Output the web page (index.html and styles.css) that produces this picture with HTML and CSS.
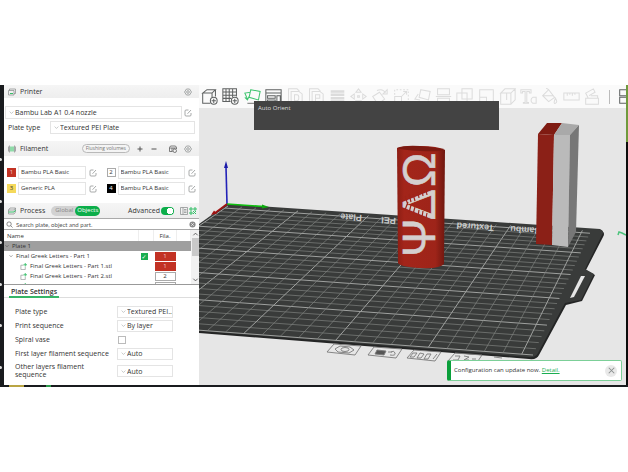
FILE: index.html
```html
<!DOCTYPE html>
<html lang="en">
<head>
<meta charset="utf-8">
<title>Slicer</title>
<link rel="stylesheet" href="styles.css">
</head>
<body>
<svg class="defs" aria-hidden="true">
  <symbol id="gear" viewBox="0 0 16 16"><path d="M5 2h6l4 6-4 6H5L1 8z"/><circle cx="8" cy="8" r="2.6"/></symbol>
  <symbol id="edit" viewBox="0 0 16 16"><path d="M9 2H4Q2 2 2 4v8q0 2 2 2h8q2 0 2-2V8M7 9.500l7-7.500"/></symbol>
  <symbol id="chev" viewBox="0 0 16 16"><path d="M2 5l6 6 6-6"/></symbol>
  <symbol id="part" viewBox="0 0 16 16"><path d="M8 5H2v10h10V9"/><path class="green" d="M12 0v8M8 4h8"/></symbol>
</svg>
<main class="app">
  <div class="edge"><i></i><i></i><i></i><i></i><i></i><i></i></div>
  <aside class="sidebar">
    <header class="bar bar-first">
      <svg class="ico" viewBox="0 0 16 16"><path d="M3 5V2h12v9h-3M1 5h11v9H1z"/><path class="green" d="M4 11h6"/></svg>
      <h2>Printer</h2>
      <button class="push" aria-label="Printer settings"><svg class="ico"><use href="#gear"/></svg></button>
    </header>
    <section class="printer">
      <div class="line">
        <label class="pick grow"><svg><use href="#chev"/></svg><select aria-label="Printer model"><option>Bambu Lab A1 0.4 nozzle</option></select></label>
        <button aria-label="Edit printer"><svg class="ico"><use href="#edit"/></svg></button>
      </div>
      <div class="line plate">
        <label for="plate">Plate type</label>
        <div class="pick grow"><svg><use href="#chev"/></svg><select id="plate"><option>Textured PEI Plate</option></select></div>
      </div>
    </section>
    <header class="bar">
      <svg class="ico" viewBox="0 0 16 16"><path class="spool" d="M4 3h8v10H4z"/><path d="M3 1v14M13 1v14M1 3v10M15 3v10"/></svg>
      <h2>Filament</h2>
      <button class="flush push">Flushing volumes</button>
      <button class="sign" aria-label="Add"><svg class="ico" viewBox="0 0 16 16"><path class="heavy" d="M8 3v10M3 8h10"/></svg></button>
      <button class="sign" aria-label="Remove"><svg class="ico" viewBox="0 0 16 16"><path class="heavy" d="M3 8h10"/></svg></button>
      <button class="ams" aria-label="Sync"><svg class="ico" viewBox="0 0 16 16"><path class="dark" d="M7 13H1V5l2-3h10l2 3v3M1 6h14M6 6v7M10 6v2"/><circle class="dark" cx="11.500" cy="11.500" r="3.500"/></svg></button>
      <button aria-label="Filament settings"><svg class="ico"><use href="#gear"/></svg></button>
    </header>
    <section class="filaments">
      <div class="fil"><b class="sw red">1</b><select aria-label="Filament 1"><option>Bambu PLA Basic</option></select><button aria-label="Edit 1"><svg class="ico"><use href="#edit"/></svg></button></div>
      <div class="fil"><b class="sw white">2</b><select aria-label="Filament 2"><option>Bambu PLA Basic</option></select><button aria-label="Edit 2"><svg class="ico"><use href="#edit"/></svg></button></div>
      <div class="fil"><b class="sw yellow">3</b><select aria-label="Filament 3"><option>Generic PLA</option></select><button aria-label="Edit 3"><svg class="ico"><use href="#edit"/></svg></button></div>
      <div class="fil"><b class="sw black">4</b><select aria-label="Filament 4"><option>Bambu PLA Basic</option></select><button aria-label="Edit 4"><svg class="ico"><use href="#edit"/></svg></button></div>
    </section>
    <header class="bar">
      <svg class="ico" viewBox="0 0 16 16"><path d="M4 2h11l-3 4H1zM1 6v8h11l3-4V2"/><path class="green" d="M1 10h11l3-4"/></svg>
      <h2>Process</h2>
      <div class="seg"><button>Global</button><button class="on">Objects</button></div>
      <label class="adv push">Advanced<input type="checkbox" checked></label>
      <button aria-label="Compare"><svg class="ico" viewBox="0 0 16 16"><path d="M1 1h14v14H1zM6 1v14M8 5h5M8 8h5M8 11h5"/></svg></button>
      <button class="last" aria-label="Parameters"><svg class="ico" viewBox="0 0 16 16"><path class="green" d="M2 2h4v4H2zM10 2h4v4h-4zM2 10h4v4H2zM8 8l6 6M14 8l-6 6"/></svg></button>
    </header>
    <div class="search">
      <svg class="ico" viewBox="0 0 16 16"><circle class="dark" cx="7" cy="7" r="5"/><path class="dark" d="M11 11l4 4"/></svg>
      <input type="text" aria-label="Search" placeholder="Search plate, object and part.">
      <button aria-label="Clear"><svg class="ico" viewBox="0 0 16 16"><circle class="fill" cx="8" cy="8" r="7"/><path class="cut" d="M5 5l6 6M11 5l-6 6"/></svg></button>
    </div>
    <div class="tree">
      <table>
        <thead><tr><th class="name">Name</th><th class="tick"></th><th class="fila">Fila.</th><th class="rest"></th></tr></thead>
        <tbody>
          <tr class="group"><td><svg class="tw"><use href="#chev"/></svg>Plate 1</td><td></td><td></td><td></td></tr>
          <tr class="obj"><td><svg class="tw"><use href="#chev"/></svg>Final Greek Letters - Part 1</td><td><input type="checkbox" class="ok" aria-label="Printable" checked></td><td><span class="chip red">1</span></td><td></td></tr>
          <tr class="sub"><td><svg class="tp"><use href="#part"/></svg>Final Greek Letters - Part 1.stl</td><td></td><td><span class="chip red">1</span></td><td></td></tr>
          <tr class="sub"><td><svg class="tp"><use href="#part"/></svg>Final Greek Letters - Part 2.stl</td><td></td><td><span class="chip white">2</span></td><td></td></tr>
          <tr class="sub"><td><svg class="tp"><use href="#part"/></svg>Final Greek Letters - Part 3.stl</td><td></td><td><span class="chip white">4</span></td><td></td></tr>
        </tbody>
      </table>
      <div class="scroll"><svg viewBox="0 0 16 16"><path d="M3 11l5-5 5 5"/></svg><i></i><svg viewBox="0 0 16 16"><path d="M3 5l5 5 5-5"/></svg></div>
    </div>
    <div class="tabs"><h3>Plate Settings</h3></div>
    <form class="settings">
      <label for="s1">Plate type</label><div class="pick"><svg><use href="#chev"/></svg><select id="s1"><option>Textured PEI...</option></select></div>
      <label for="s2">Print sequence</label><div class="pick"><svg><use href="#chev"/></svg><select id="s2"><option>By layer</option></select></div>
      <label for="s3">Spiral vase</label><input id="s3" type="checkbox" class="box">
      <label for="s4">First layer filament sequence</label><div class="pick"><svg><use href="#chev"/></svg><select id="s4"><option>Auto</option></select></div>
      <label for="s5" class="two">Other layers filament sequence</label><div class="pick"><svg><use href="#chev"/></svg><select id="s5"><option>Auto</option></select></div>
    </form>
  </aside>
  <section class="view">
    <nav class="tools">
      <button class="act" aria-label="Add"><svg viewBox="0 0 20 20"><path d="M2 6l5-4h10l-4 4zM2 6v12h9M13 6v5M17 2v8"/><circle cx="15" cy="15" r="4"/><path d="M15 12.500v5M12.500 15h5"/></svg></button>
      <button class="act" aria-label="Add plate"><svg viewBox="0 0 20 20"><path d="M10 16H1V1h16v9M1 4.700h16M1 8.500h16M1 12.200h10M4.700 1v15M8.500 1v15M12.500 1v10"/><circle cx="15" cy="15" r="4"/><path d="M15 12.500v5M12.500 15h5"/></svg></button>
      <button class="hot" aria-label="Auto orient"><svg viewBox="0 0 20 20"><path d="M8 2l11 2-2 10-11-3zM8 5L1 6l3 7M1 11l3 3 2-4"/><path class="gray" d="M4 18h13"/></svg></button>
      <button class="act" aria-label="Arrange"><svg viewBox="0 0 20 20"><path d="M1 2h18v4H1zM1 6v13h18V6M3 9h9v3H3zM14 9h4v9h-4zM3 14h9v4H3z"/></svg></button>
      <button aria-label="Split objects"><svg viewBox="0 0 20 20"><path d="M3 15V1h10l3 3M6 4h9l4 3v12H6zM10 8h3q2 0 2 3v1q0 3-2 3h-3z"/></svg></button>
      <button aria-label="Split parts"><svg viewBox="0 0 20 20"><path d="M3 15V1h10l3 3M6 4h9l4 3v12H6zM10 16V8h5v4h-5"/></svg></button>
      <button aria-label="Layers"><svg viewBox="0 0 20 20"><path class="thick" d="M2 4h16M2 8h16M2 12h16M2 16h16"/></svg></button>
      <button aria-label="Move"><svg viewBox="0 0 20 20"><path d="M10 1l3 4H7zM10 19l3-4H7zM1 10l4-3v6zM19 10l-4-3v6zM9 9h2v2H9z"/></svg></button>
      <button aria-label="Rotate"><svg viewBox="0 0 20 20"><path d="M2 10l8-5 6 8-8 6zM7 3q7-3 10 3M14 7h5V2z"/></svg></button>
      <button aria-label="Scale"><svg viewBox="0 0 20 20"><path d="M2 10h8v8H2z"/><path class="dash" d="M2 8V2h16v16h-6"/><path d="M10 10l6-6M12 4h4v4"/></svg></button>
      <button aria-label="Lay on face"><svg viewBox="0 0 20 20"><path d="M8 2l11 2-2 10-11-3zM5 7l-4 6 6 1"/></svg></button>
      <button aria-label="Cut"><svg viewBox="0 0 20 20"><path d="M3 8V1h14v7zM1 10h18M3 12h14v7H3z"/></svg></button>
      <button aria-label="Boolean"><svg viewBox="0 0 20 20"><path d="M1 6h12v12H1zM7 1h12v12H7z"/></svg></button>
      <button aria-label="Support"><svg viewBox="0 0 20 20"><path d="M2 2h16v16h-8v-7H2zM2 11v7h8"/></svg></button>
      <button aria-label="Seam"><svg viewBox="0 0 20 20"><path d="M2 6l5-5h12l-5 5zM2 6v13h12V6M14 19l5-5V1M9 6v8"/></svg></button>
      <button aria-label="Text"><svg viewBox="0 0 20 20"><path d="M1 2h12v4h-2V4H8v13h2v1H4v-1h2V4H3v2H1zM19 11v7h-4q-2-1-2-3.500t2-3.500z"/></svg></button>
      <button aria-label="Color"><svg viewBox="0 0 20 20"><path d="M2 9l7-7 7 9-7 5zM2 9h13M9 2L6 0M17 12q3 5 0 6t0-6z"/></svg></button>
      <button aria-label="Measure"><svg viewBox="0 0 20 20"><path d="M1 6h18v8H1zM5 6v3M8 6v2M11 6v3M14 6v2"/></svg></button>
      <button aria-label="Assembly"><svg viewBox="0 0 20 20"><path d="M2 12h15v7H2zM5 12l-3-6 9-5 2 4-7 4M8 9h8v3"/></svg></button>
      <span class="sep"></span>
      <button class="act end" aria-label="Assembly view"><svg viewBox="0 0 20 20"><path d="M2 2h8v7H2zM2 11h8v7H2zM12 2h8v7M12 18h8v-7M10 6h5M10 14h5"/></svg></button>
    </nav>
    <svg class="scene" viewBox="199 108 427 277" preserveAspectRatio="xMinYMin slice" role="img" aria-label="Build plate">
      <defs>
        <linearGradient id="cyl"><stop offset="0" stop-color="#8c1e14"/><stop offset=".15" stop-color="#a3251a"/><stop offset=".8" stop-color="#9e2419"/><stop offset="1" stop-color="#6f170f"/></linearGradient>
      </defs>
      <path class="plate-side" d="M199 225L227 205 600 230Q606 232 603 237L586 270 595 275 582 301 566 305 539 355Q537 360 529 359L199 333z"/>
      <path class="plate-top" d="M199 224L227 204 600 229Q605 231 602 235L585 269 594 274 581 300 565 303 538 353Q536 358 528 357L199 331z"/>
      <path class="slot" d="M581 276h4l-11 21-4 1z"/>
      <g id="grid"></g>
      <g class="mark">
        <text transform="translate(362 215) rotate(184)">Plate</text><text transform="translate(396 218) rotate(184)">PEI</text>
        <text transform="translate(494 225) rotate(184)">Textured</text><text transform="translate(541 228) rotate(184)">Bambu</text>
      </g>
      <g class="stamps">
        <path d="M334 344l27 2-6 9-28-3zM335 349l5-3 10 1 4 3-5 3-11-1z"/><ellipse cx="345" cy="349.500" rx="4" ry="2"/>
        <path d="M374 347l28 2-6 9-28-3zM388 352h4M390 355q6 1 5-2t-4-1"/><path class="solid" d="M377 350l9 1-2 4-9-1z"/>
        <path d="M414 350l27 2-6 9-28-3zM413 353l4 0-3 4h-4zM420 353l4 1-3 4h-4zM427 354l4 0-3 5h-4zM437 354l-4 5"/>
        <path d="M455 353l27 2-6 9-28-3zM455 356h5l-2 4h-5M464 356l5 1-5 3h5M472 359h4M494 357l8 1"/>
      </g>
      <path class="z" d="M227 204l-1-37"/><path class="zt" d="M226 161l2 7h-4z"/>
      <path class="y" d="M227 204l37 2.500"/><path class="yt" d="M269 207l-7-2.500v4z"/>
      <path class="x" d="M227 204l-12 9"/><path class="xt" d="M211 215l3-4.500 3 3z"/>
      <path fill="url(#cyl)" d="M397 148Q402 146 420 146T445 150L444 264Q440 269 420 268T398 263z"/>
      <path class="lid" d="M397 148Q404 145 420 146T445 150Q438 152 420 151T397 148z"/>
      <g class="greek">
        <text transform="translate(435 257) rotate(-90)">Ψ</text>
        <text transform="translate(435 220) rotate(-90)">Δ</text>
        <text transform="translate(435 187) rotate(-90)">Ω</text>
      </g>
      <path class="hatch" d="M405 196l3 9M409 194l2 8M413 194l2 7M418 192l1 6M422 190l1 6M426 190l1 5M405 210l3-8M409 213l2-8M413 214l2-7M418 216l1-6M422 217l1-6M426 218l1-5"/>
      <path class="b1" d="M538 134L547 123H562L554 135z"/>
      <path class="b2" d="M554 135L562 123 579 125 570 135z"/>
      <path class="b3" d="M538 134L554 135 552 245 536 244z"/>
      <path class="b4" d="M554 135L570 135 568 247 552 245z"/>
      <path class="b5" d="M570 135L579 125 576 232 568 247z"/>
      <path class="tag" d="M618 235l1-3 3 1 4 2"/>
    </svg>
    <div class="tip" role="tooltip">Auto Orient</div>
    <div class="toast"><p>Configuration can update now. <a href="#">Detail.</a></p><button aria-label="Close"><svg viewBox="0 0 16 16"><path d="M4 4l8 8M12 4l-8 8"/></svg></button></div>
  </section>
  <div class="redge"></div>
</main>
<script src="grid.js"></script>
</body>
</html>
```
FILE: styles.css
```css
* { box-sizing: border-box; }
body { margin: 0; padding: 85px 0; height: 100vh; min-height: 472px; background: #fff; color: #333; font: 7px/9px "Open Sans", "Noto Sans", sans-serif; }
.defs { position: absolute; width: 0; height: 0; }
h2, h3, p { margin: 0; font: inherit; }
button, select, input { margin: 0; padding: 0; border: 0; background: none; color: inherit; font: inherit; appearance: none; }
button { display: flex; align-items: center; justify-content: center; flex: none; }
svg { fill: none; stroke: #8b8f8f; stroke-width: 1.5; }
.green { stroke: #35bf68; stroke-width: 2; }
.dark { stroke: #555; }
.heavy { stroke: #555; stroke-width: 2; }
.spool { fill: #8fdba9; stroke: none; }
.fill { fill: #8a8a8a; stroke: none; }
.cut { stroke: #fff; }
.ico { width: 8px; height: 8px; display: block; flex: none; }
.push { margin-left: auto; }
.grow { flex: 1; }

.app { display: grid; grid-template-columns: 4px minmax(195px, 31%) 1fr 2px; height: 100%; background: #191b1e linear-gradient(90deg, transparent 9px, #b9a544 9px 24px, transparent 24px 46px, #2c9a4c 46px 51px, transparent 51px); padding-bottom: 2px; }
.edge { display: flex; flex-direction: column; justify-content: space-between; padding: 73px 0 16px; background: #191b1e; }
.edge i { width: 2px; height: 3px; background: #ddd; border-radius: 0 2px 2px 0; }
.redge { background: linear-gradient(#6f9a3c 57px, #0c0c0c 57px); }

.sidebar { background: #fff; display: flex; flex-direction: column; overflow: hidden; }
.bar { display: flex; align-items: center; height: 15px; padding: 0 7px 0 4px; background: linear-gradient(#f5f5f5, #eee); flex: none; }
.bar-first { height: 13px; }
.bar h2 { margin-left: 4px; }
.printer { padding: 8px 4px 7px 1px; display: grid; gap: 2px; }
.line { display: flex; align-items: center; }
.line button { margin: 0 3px 0 2px; }
.pick { display: flex; align-items: center; height: 13px; border: 1px solid #e4e4e4; padding-left: 3px; min-width: 0; }
.pick svg { width: 5px; height: 5px; flex: none; }
.pick select { flex: 1; min-width: 0; padding-left: 1px; overflow: hidden; white-space: nowrap; }
.plate { padding-left: 3px; }
.plate label { width: 42px; }
.flush { border: 1px solid #b9b9b9; border-radius: 5px; height: 9px; padding: 0 3px; font-size: 5px; color: #777; background: #f4f4f4; }
.sign { margin-left: 6px; }
.ams { margin: 0 7px 0 11px; }
.filaments { display: grid; grid-template-columns: 1fr 1fr; gap: 3px 10px; padding: 10px 3px 8px 3px; }
.fil { display: flex; align-items: center; height: 13px; }
.fil select { flex: 1; min-width: 0; height: 13px; border: 1px solid #e4e4e4; margin: 0 3px 0 2px; padding-left: 2px; font-size: 6px; }
.sw { width: 9px; height: 9px; font-size: 6px; line-height: 9px; text-align: center; font-weight: 400; }
.red { background: #c23224; color: #f2c9c4; }
.white { background: #fff; border: 1px solid #aaa; line-height: 7px; }
.yellow { background: #f5d95b; }
.black { background: #000; color: #fff; }
.seg { display: flex; height: 10px; margin-left: 6px; background: #d2d2d2; border-radius: 5px; }
.seg button { padding: 0 2px 0 4px; font-size: 6px; color: #888; border-radius: 5px; }
.seg .on { background: #0cae4a; color: #fff; padding: 0 2px; }
.adv { display: flex; align-items: center; gap: 1px; margin-right: 6px; }
.adv input { width: 13px; height: 8px; border-radius: 4px; background: radial-gradient(circle at 9px 4px, #fff 3px, #0cae4a 3px); }
.last { margin: 0 -5px 0 1px; }

.search { display: flex; align-items: center; height: 12px; padding: 0 3px 0 2px; border: solid #aaa; border-width: 1px 0; flex: none; }
.search .ico { width: 7px; height: 7px; }
.search input { flex: 1; min-width: 0; height: 9px; padding-left: 3px; font: 6px/9px Lato, sans-serif; }
.search input::placeholder { color: #555; opacity: 1; }
.tree { display: flex; height: 55px; overflow: hidden; border-bottom: 1px solid #999; flex: none; }
table { flex: 1; border-collapse: collapse; table-layout: fixed; width: 100%; height: 61px; font-size: 6px; line-height: 8px; }
th, td { padding: 0; height: 10px; font-weight: 400; text-align: left; white-space: nowrap; }
th { height: 11px; border-right: 1px solid #eee; padding-left: 3px; }
.tick { width: 15px; }
.fila { width: 23px; text-align: center; padding: 0; }
.rest { width: 14px; }
.group { background: #9f9f9f; }
td:nth-child(2) { padding-left: 2px; }
.tw { width: 4px; height: 4px; margin: 0 3px 0 1px; stroke: #444; stroke-width: 2; vertical-align: middle; }
.obj .tw { margin-left: 5px; margin-right: 3px; }
.tp { width: 7px; height: 7px; margin: 0 3px 0 16px; vertical-align: middle; }
.ok { display: block; width: 7px; height: 7px; background: #19ad50; }
.ok::after { content: "✓"; display: block; color: #fff; font: 6px/7px "DejaVu Sans", sans-serif; text-align: center; }
.chip { display: block; height: 9px; margin: 0 1px; line-height: 9px; text-align: center; }
.chip.white { line-height: 7px; }
.scroll { width: 8px; background: #f1f1f1; display: flex; flex-direction: column; align-items: center; }
.scroll svg { width: 7px; height: 8px; stroke: #555; stroke-width: 2; }
.scroll i { width: 7px; height: 18px; background: #c9c9c9; margin-bottom: auto; }

.tabs { display: flex; padding-left: 5px; border-bottom: 1px solid #ddd; flex: none; }
.tabs h3 { height: 13px; padding: 0 2px; line-height: 13px; font-weight: 600; border-bottom: 2px solid #35b566; margin-bottom: -1px; }
.settings { display: grid; grid-template-columns: 102px 56px; gap: 1px 0; padding: 7px 0 0 11px; align-items: center; }
.settings .pick { height: 12px; }
.settings label { line-height: 13px; }
.settings .two { line-height: 8px; width: 80px; padding: 2px 0; }
.box { width: 8px; height: 8px; border: 1px solid #bbb; margin-left: 1px; }

.view { position: relative; display: flex; flex-direction: column; min-width: 0; min-height: 0; background: #e6e6e6; overflow: hidden; }
.tools { display: flex; height: 23px; background: #fafafa; flex: none; }
.tools button { flex: 1; }
.tools svg { width: 17px; height: 17px; stroke: #dcdcdc; stroke-width: 1.2; }
.tools .act svg { stroke: #5f6262; }
.tools .hot svg { stroke: #3fc46f; }
.tools .gray { stroke: #777; }
.thick { stroke-width: 3; }
.dash { stroke-dasharray: 2 2; }
.sep { width: 1px; height: 14px; margin: 5px 8px 0 6px; background: #bbb; }
.tools .end { flex: 0 0 8px; overflow: hidden; justify-content: flex-start; }
.tools .end svg { flex: none; }
.scene { flex: 1; min-height: 0; width: 100%; display: block; stroke: none; }
.plate-side { fill: #242525; }
.plate-top { fill: #393b3a; }
.slot { fill: #e6e6e6; }
.minor { stroke: #808280; stroke-width: .7; }
.major { stroke: #9fa19f; stroke-width: 1; }
.mark text { font: 700 9px "Liberation Sans", sans-serif; fill: #c9cbca; }
.stamps path, .stamps ellipse { stroke: #7b7b7b; stroke-width: .9; }
.stamps .solid { fill: #555; }
.x, .y, .z { stroke-width: 1.6; }
.x { stroke: #a01212; } .xt { fill: #a01212; }
.y { stroke: #0fc010; } .yt { fill: #0fa810; }
.z { stroke: #2222b8; } .zt { fill: #1a1aa8; }
.lid { fill: #7c1a11; }
.greek text { font: 46px "Liberation Sans", sans-serif; fill: #d4cfcf; stroke: #d4cfcf; stroke-width: .6; }
.hatch { stroke: #9f2419; stroke-width: 1.2; }
.b1 { fill: #7f1b12; } .b2 { fill: #a9a9a9; } .b3 { fill: #8b2017; } .b4 { fill: #bababa; } .b5 { fill: #777; }
.tag { stroke: #4cc47c; stroke-width: 1.5; }
.tip { position: absolute; left: 55px; top: 16px; width: 245px; height: 29px; padding: 3px 4px; background: #434343; color: #ddd; font-size: 6px; }
.toast { position: absolute; right: 4px; bottom: 4px; width: 175px; height: 21px; display: flex; align-items: center; justify-content: space-between; padding: 0 4px 0 3px; background: #fff; border: 1px solid #7ccf98; border-left: 4px solid #0a9f3a; border-radius: 2px; font-size: 6px; }
.toast a { color: #1aae50; }
.toast button { width: 12px; height: 12px; border-radius: 50%; background: #e9e9e9; }
.toast button svg { width: 11px; height: 11px; }
```
FILE: grid.js
```js
// Projects the 256 mm bed onto the four screen corners of the plate.
const [A, B, C, D] = [[228, 206], [591, 231], [533, 355], [62, 320]];
const dx1 = B[0] - C[0], dx2 = D[0] - C[0], sx = A[0] - B[0] + C[0] - D[0];
const dy1 = B[1] - C[1], dy2 = D[1] - C[1], sy = A[1] - B[1] + C[1] - D[1];
const det = dx1 * dy2 - dx2 * dy1;
const g = (sx * dy2 - dx2 * sy) / det;
const h = (dx1 * sy - sx * dy1) / det;
const project = (u, v) => {
  const w = g * u + h * v + 1;
  return [
    ((B[0] - A[0] + g * B[0]) * u + (D[0] - A[0] + h * D[0]) * v + A[0]) / w,
    ((B[1] - A[1] + g * B[1]) * u + (D[1] - A[1] + h * D[1]) * v + A[1]) / w
  ];
};
const grid = document.getElementById("grid");
const add = (p, q, major) => {
  const line = document.createElementNS("http://www.w3.org/2000/svg", "line");
  line.setAttribute("x1", p[0]);
  line.setAttribute("y1", p[1]);
  line.setAttribute("x2", q[0]);
  line.setAttribute("y2", q[1]);
  line.setAttribute("class", major ? "major" : "minor");
  grid.append(line);
};
for (let mm = 0; mm <= 250; mm += 10) {
  const t = mm / 256;
  add(project(t, 0), project(t, 1), mm % 50 === 0);
  add(project(0, 1 - t), project(1, 1 - t), mm % 50 === 0);
}
```
